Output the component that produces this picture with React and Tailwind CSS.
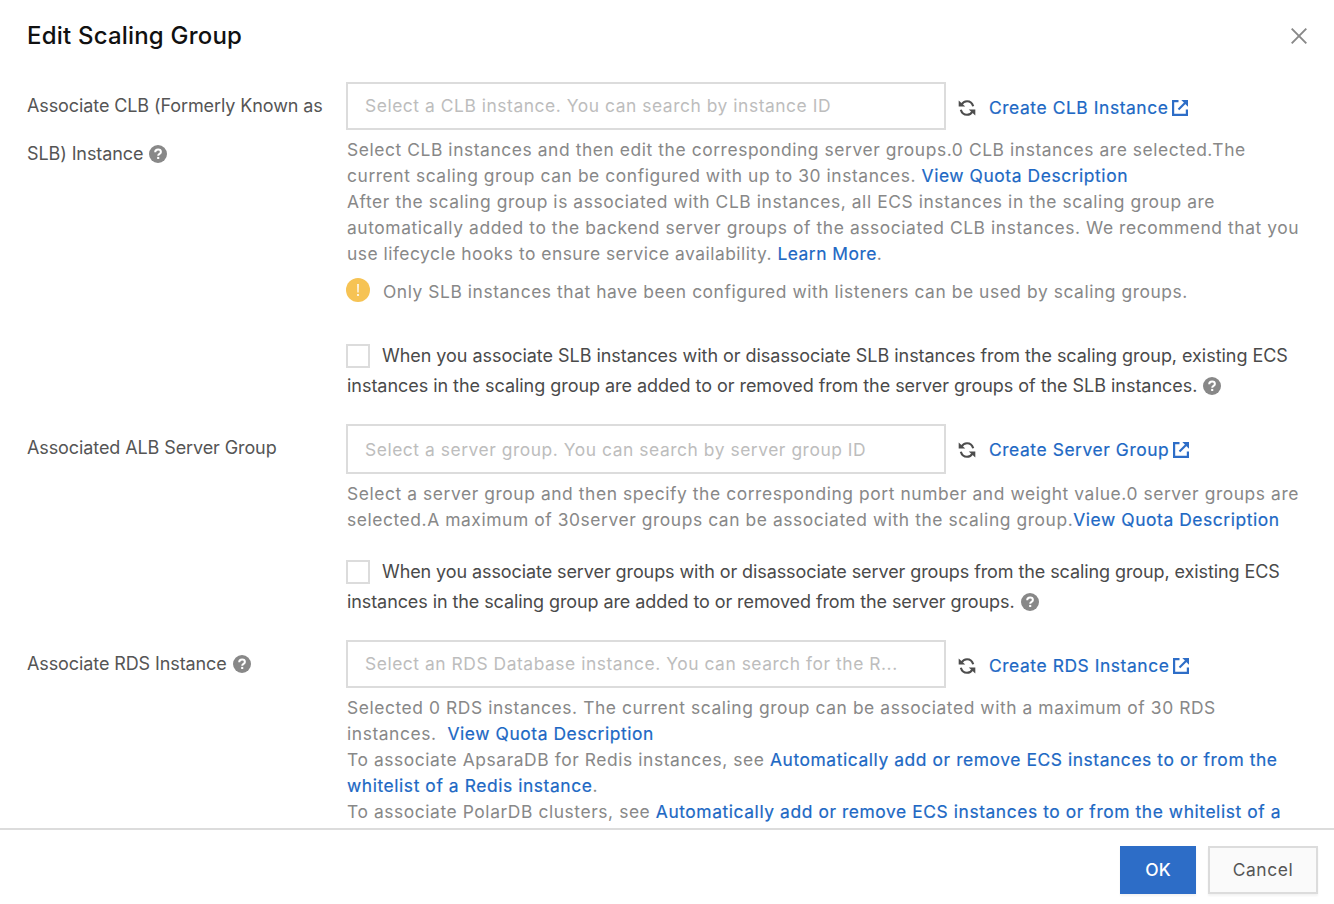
import React from 'react';

function HelpIcon({ className = '' }) {
  return (
    <svg viewBox="0 0 18 18" className={`mb-px inline-block size-[18px] shrink-0 ${className}`} aria-hidden="true">
      <circle cx="9" cy="9" r="9" fill="#888" />
      <path d="M6.200 7.200C6.200 5.500 7.400 4.600 9.100 4.600s2.800.9 2.800 2.400c0 1.900-2.700 1.800-2.700 3.700" fill="none" stroke="#fff" strokeWidth="2" />
      <rect x="8.150" y="11.900" width="2.100" height="2.100" fill="#fff" />
    </svg>
  );
}

function RefreshIcon() {
  return (
    <svg viewBox="0 0 18 18" className="mb-px size-[18px] shrink-0" fill="none" stroke="#4d4d4d" strokeWidth="2.100" aria-hidden="true">
      <path d="M3.600 5.600C4.800 3.300 6.500 2.200 9 2.200c3.100 0 5.300 1.900 6.200 5" />
      <path d="M14.400 12.400C13.200 14.700 11.500 15.800 9 15.800c-3.100 0-5.300-1.900-6.200-5" />
      <path d="M.7 1.500v6h6.500z" fill="#4d4d4d" stroke="none" />
      <path d="M17.300 16.500v-6h-6.500z" fill="#4d4d4d" stroke="none" />
    </svg>
  );
}

function ExternalIcon() {
  return (
    <svg viewBox="0 0 18 18" className="mb-px ml-[3px] size-[18px] shrink-0" fill="none" stroke="#2d6dc7" strokeWidth="2.200" aria-hidden="true">
      <path d="M7.500 2.100H2.100v13.800h13.800v-5.400" />
      <path d="M7.500 10.500 14 4" />
      <path d="M10.300 1H17v6.700z" fill="#2d6dc7" stroke="none" />
    </svg>
  );
}

function Link({ children }) {
  return <a href="#" className="text-[#2068c4] [-webkit-text-stroke:0.2px_#2068c4]">{children}</a>;
}

function Line({ children }) {
  return <div className="whitespace-pre pl-px">{children}</div>;
}

function Field({ label, className = '', children }) {
  return (
    <section className={`flex ${className}`}>
      <div className="w-[319px] shrink-0 whitespace-pre text-[18px] leading-[48px] tracking-[-0.1px] text-[#555]">{label}</div>
      <div className="min-w-0 flex-1">{children}</div>
    </section>
  );
}

function Picker({ placeholder, action, height, textPad = '' }) {
  return (
    <div className={`flex ${height}`}>
      <div className={`flex w-[600px] items-center border-2 border-[#dcdcdc] px-[17px] tracking-[0.55px] text-[#bdbdbd] ${textPad}`}>{placeholder}</div>
      <div className="ml-3 mt-[2px] flex h-12 items-center">
        <RefreshIcon />
        <a href="#" className="ml-[13px] flex items-center whitespace-nowrap text-[#2068c4] [-webkit-text-stroke:0.2px_#2068c4]">
          {action}
          <ExternalIcon />
        </a>
      </div>
    </div>
  );
}

function CheckRow({ first, second, className, tracking }) {
  return (
    <label className={`block whitespace-pre text-[18px] leading-[30px] text-[#4a4a4a] ${tracking} ${className}`}>
      <span className="flex items-center">
        <input type="checkbox" className="mr-3 size-6 appearance-none border-2 border-[#dcdcdc] bg-white" />
        {first}
      </span>
      <span className="flex items-center pl-px">
        {second}
        <HelpIcon className="ml-[6px]" />
      </span>
    </label>
  );
}

export default function App() {
  return (
    <div className="flex h-[904px] w-[1334px] flex-col overflow-hidden bg-white font-['Inter','Liberation_Sans',sans-serif] text-[17.4px] leading-[26px] tracking-[0.58px] text-[#888]">
      <header className="flex h-[72px] shrink-0 items-center justify-between pl-[27px] pr-[27px]">
        <h1 className="text-[24px] font-medium tracking-[0.2px] text-[#111]">Edit Scaling Group</h1>
        <button aria-label="Close">
          <svg viewBox="0 0 16 16" className="size-4" stroke="#888" strokeWidth="1.900" aria-hidden="true">
            <path d="M.7.7l14.600 14.600M15.300.7.7 15.300" />
          </svg>
        </button>
      </header>

      <main className="h-[756px] shrink-0 overflow-hidden pl-[27px] pt-[10px]">
        <Field
          className="h-[342px]"
          label={<>
            <div>Associate CLB (Formerly Known as</div>
            <div className="flex items-center">SLB) Instance<HelpIcon className="ml-[6px]" /></div>
          </>}
        >
          <Picker height="h-12" placeholder="Select a CLB instance. You can search by instance ID" action="Create CLB Instance" />
          <div className="mt-[7px]">
            <Line>Select CLB instances and then edit the corresponding server groups.0 CLB instances are selected.The</Line>
            <Line>current scaling group can be configured with up to 30 instances. <Link>View Quota Description</Link></Line>
            <Line>After the scaling group is associated with CLB instances, all ECS instances in the scaling group are</Line>
            <Line>automatically added to the backend server groups of the associated CLB instances. We recommend that you</Line>
            <div className="whitespace-pre pl-px tracking-[0.5px]">use lifecycle hooks to ensure service availability. <Link>Learn More</Link>.</div>
          </div>
          <div className="mt-[11px] flex">
            <svg viewBox="0 0 24 24" className="mr-[13px] size-6" aria-hidden="true">
              <circle cx="12" cy="12" r="12" fill="#f6c354" />
              <path d="M11.200 6h1.600l-.2 8.500h-1.200z" fill="#fff" />
              <circle cx="12" cy="17" r="1.100" fill="#fff" />
            </svg>
            <div className="mt-px whitespace-nowrap tracking-[0.56px]">Only SLB instances that have been configured with listeners can be used by scaling groups.</div>
          </div>
          <CheckRow
            className="mt-[36px]"
            tracking="tracking-[-0.04px]"
            first="When you associate SLB instances with or disassociate SLB instances from the scaling group, existing ECS"
            second="instances in the scaling group are added to or removed from the server groups of the SLB instances."
          />
        </Field>

        <Field className="h-[216px]" label="Associated ALB Server Group">
          <Picker height="h-[50px]" textPad="pt-[2px]" placeholder="Select a server group. You can search by server group ID" action="Create Server Group" />
          <div className="mt-[7px]">
            <Line>Select a server group and then specify the corresponding port number and weight value.0 server groups are</Line>
            <Line>selected.A maximum of 30server groups can be associated with the scaling group.<Link>View Quota Description</Link></Line>
          </div>
          <CheckRow
            className="mt-6"
            tracking="tracking-[-0.09px]"
            first="When you associate server groups with or disassociate server groups from the scaling group, existing ECS"
            second="instances in the scaling group are added to or removed from the server groups."
          />
        </Field>

        <Field label={<div className="flex items-center">Associate RDS Instance<HelpIcon className="ml-[6px]" /></div>}>
          <Picker height="h-12" placeholder="Select an RDS Database instance. You can search for the R..." action="Create RDS Instance" />
          <div className="mt-[7px]">
            <Line>Selected 0 RDS instances. The current scaling group can be associated with a maximum of 30 RDS</Line>
            <Line>instances.  <Link>View Quota Description</Link></Line>
            <Line>To associate ApsaraDB for Redis instances, see <Link>Automatically add or remove ECS instances to or from the</Link></Line>
            <Line><Link>whitelist of a Redis instance</Link>.</Line>
            <Line>To associate PolarDB clusters, see <Link>Automatically add or remove ECS instances to or from the whitelist of a</Link></Line>
          </div>
        </Field>
      </main>

      <footer className="flex h-[76px] shrink-0 items-start justify-end gap-3 border-t-2 border-[#dcdcdc] pr-4 pt-4">
        <button className="h-12 w-[76px] bg-[#2d6dc7] font-medium tracking-[0.2px] text-white shadow-[0_2px_2px_rgba(0,0,0,0.05)]">OK</button>
        <button className="h-12 w-[110px] border-2 border-[#dcdcdc] bg-[#fafafa] text-[#555] shadow-[0_2px_2px_rgba(0,0,0,0.05)]">Cancel</button>
      </footer>
    </div>
  );
}
